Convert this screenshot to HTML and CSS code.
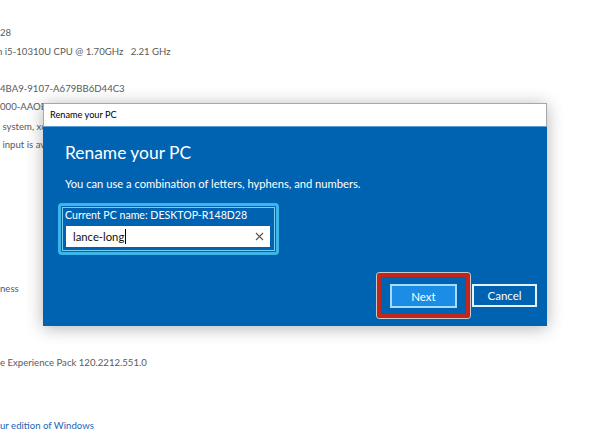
FILE: index.html
```
<!DOCTYPE html>
<html>
<head>
<meta charset="utf-8">
<link rel="stylesheet" href="styles.css">
</head>
<body>
<div class="page">
  <div class="line l1">28</div>
  <div class="line l2"><span class="cut">n</span> i5-10310U CPU @ 1.70GHz&nbsp;&nbsp;&nbsp;2.21 GHz</div>
  <div class="line l3">4BA9-9107-A679BB6D44C3</div>
  <div class="line l4">000-AAOE</div>
  <div class="line l5">&nbsp;system, x64</div>
  <div class="line l6">&nbsp;input is available</div>
  <div class="line l7">ness</div>
  <div class="line l8">e Experience Pack 120.2212.551.0</div>
  <div class="line l9 link">ur edition of Windows</div>
</div>

<div class="dialog">
  <div class="titlebar">Rename your PC</div>
  <div class="body">
    <div class="heading">Rename your PC</div>
    <div class="sub">You can use a combination of letters, hyphens, and numbers.</div>
    <div class="group">
      <div class="group-inner">
        <div class="label">Current PC name: DESKTOP-R148D28</div>
        <div class="input">
          <span class="value">lance-long</span><span class="caret"></span>
          <svg class="clear" width="9" height="9" viewBox="0 0 9 9"><path d="M1 1L8 8M8 1L1 8" stroke="#555" stroke-width="1.1" fill="none"/></svg>
        </div>
      </div>
    </div>
    <div class="actions">
      <div class="highlight"><div class="btn primary">Next</div></div>
      <div class="btn">Cancel</div>
    </div>
  </div>
</div>
</body>
</html>
```
FILE: styles.css
```
html, body {
  margin: 0;
  padding: 0;
}
body {
  width: 592px;
  height: 444px;
  overflow: hidden;
  position: relative;
  background: #fff;
  font-family: Lato, "Noto Sans", sans-serif;
}
.page {
  padding-top: 24px;
  color: #5a5a5a;
  font-size: 9.6px;
}
.line {
  height: 18px;
  line-height: 18px;
  white-space: nowrap;
}
.cut { margin-left: -3px; }
.l2 { margin-top: 1px; }
.l3 { margin-top: 19px; }
.l5 { margin-top: 2px; }
.l7 { margin-top: 126px; }
.l8 { margin-top: 56px; }
.l9 { margin-top: 45px; }
.link { color: #1a66b5; }

.dialog {
  position: absolute;
  left: 43px;
  top: 103px;
  width: 504px;
  height: 223px;
  background: #0063b1;
  box-shadow: 0 2px 16px rgba(0,0,0,0.3);
  display: flex;
  flex-direction: column;
  box-sizing: border-box;
}
.titlebar {
  height: 24px;
  box-sizing: border-box;
  background: #fff;
  border: 1px solid #a8a8a8;
  border-bottom: 1px solid #5aa0d8;
  color: #000;
  font-size: 9.2px;
  line-height: 22px;
  padding-left: 6px;
}
.body {
  flex: 1;
  display: flex;
  flex-direction: column;
  padding: 14px 10px 8px 22px;
  color: #fff;
}
.heading {
  font-size: 17.4px;
  line-height: 24px;
  font-weight: 400;
}
.sub {
  margin-top: 11px;
  font-size: 11.2px;
  line-height: 16px;
}
.group {
  margin-top: 11px;
  margin-left: -7px;
  width: 221px;
  box-sizing: border-box;
  border: 3px solid #3cb4ec;
  border-radius: 4px;
  padding: 1px;
}
.group-inner {
  border: 1px solid #7ccbf0;
  padding: 0 4px 3px 3px;
}
.label {
  font-size: 10.6px;
  line-height: 14px;
  margin-left: -1px;
  white-space: nowrap;
}
.input {
  margin-top: 4px;
  height: 21px;
  background: #fff;
  display: flex;
  align-items: center;
  padding-left: 7px;
  padding-right: 6px;
  color: #111;
  font-size: 11.3px;
}
.caret {
  width: 1px;
  height: 15px;
  background: #000;
  margin-left: 1px;
}
.clear {
  margin-left: auto;
}
.actions {
  margin-top: auto;
  display: flex;
  justify-content: flex-end;
  align-items: center;
  gap: 2px;
}
.highlight {
  border: 4px solid #c1271d;
  border-radius: 3px;
  box-shadow: 0 0 0 1px #c9c9c9;
  padding: 7px 9px 6px 9px;
}
.btn {
  width: 65px;
  height: 23px;
  box-sizing: border-box;
  border: 2px solid #e6f2fb;
  color: #fff;
  font-size: 11.5px;
  display: flex;
  align-items: center;
  justify-content: center;
}
.btn.primary {
  width: 67px;
  height: 24px;
  background: #1b8de6;
  border-color: #a6dcfa;
}
```
